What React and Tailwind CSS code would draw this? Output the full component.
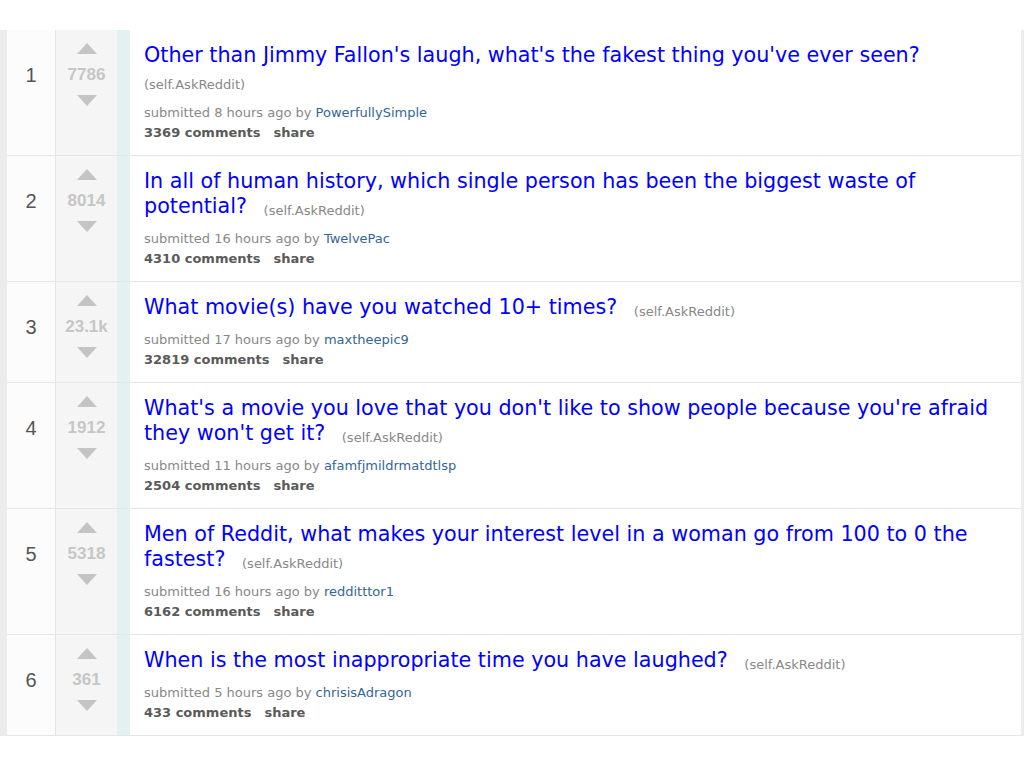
import React from "react";

const posts = [
  {
    rank: 1,
    score: "7786",
    title: "Other than Jimmy Fallon's laugh, what's the fakest thing you've ever seen?",
    time: "8 hours",
    author: "PowerfullySimple",
    comments: 3369,
  },
  {
    rank: 2,
    score: "8014",
    title: "In all of human history, which single person has been the biggest waste of potential?",
    time: "16 hours",
    author: "TwelvePac",
    comments: 4310,
  },
  {
    rank: 3,
    score: "23.1k",
    title: "What movie(s) have you watched 10+ times?",
    time: "17 hours",
    author: "maxtheepic9",
    comments: 32819,
  },
  {
    rank: 4,
    score: "1912",
    title: "What's a movie you love that you don't like to show people because you're afraid they won't get it?",
    time: "11 hours",
    author: "afamfjmildrmatdtlsp",
    comments: 2504,
  },
  {
    rank: 5,
    score: "5318",
    title: "Men of Reddit, what makes your interest level in a woman go from 100 to 0 the fastest?",
    time: "16 hours",
    author: "redditttor1",
    comments: 6162,
  },
  {
    rank: 6,
    score: "361",
    title: "When is the most inappropriate time you have laughed?",
    time: "5 hours",
    author: "chrisisAdragon",
    comments: 433,
  },
];

const Arrow = ({ down }) => (
  <svg width="20" height="11" viewBox="0 0 20 11" className="block">
    <polygon
      points={down ? "0,0 20,0 10,11" : "10,0 20,11 0,11"}
      fill="#c4c4c4"
    />
  </svg>
);

const Post = ({ post }) => (
  <div className="flex border-b border-[#e3e7ea]">
    <div className="w-[49px] shrink-0 bg-[#fcfcfc] border-r border-[#e3e6e8] flex justify-center pt-[33px] text-[20px] leading-[24px] text-[#555] font-['Liberation_Sans',Arial,sans-serif]">
      {post.rank}
    </div>
    <div className="w-[61px] shrink-0 bg-[#f5f5f5] flex flex-col items-center pt-[13px]">
      <Arrow />
      <div className="mt-[11px] mb-[10px] text-[17px] font-bold text-[#c6c6c6] leading-[20px] font-['Liberation_Sans',Arial,sans-serif]">
        {post.score}
      </div>
      <Arrow down />
    </div>
    <div className="w-[13px] shrink-0 bg-[#e4f1f1]" />
    <div className="flex-1 bg-white pl-[14px] pr-[20px] pt-[13px] pb-[12px] font-['DejaVu_Sans',Verdana,sans-serif]">
      <p className="text-[20.7px] leading-[25px] text-[#0000ff]">
        {post.title}
        <span className="inline-block w-[10px]" />{" "}
        <span className="text-[13px] leading-none align-[-2px] text-[#888]">(self.AskReddit)</span>
      </p>
      <p className="mt-[10px] text-[13px] leading-[20px] text-[#888]">
        submitted {post.time} ago by{" "}
        <span className="text-[#369]">{post.author}</span>
      </p>
      <p className="text-[13px] leading-[20px] font-bold text-[#5a5a5a]">
        {post.comments} comments<span className="ml-[13px]">share</span>
      </p>
    </div>
  </div>
);

export default function App() {
  return (
    <div className="w-[1024px] h-[768px] bg-white pt-[30px] overflow-hidden">
      <div className="flex bg-[#ececec] pl-[7px] pr-[3px]">
        <div className="flex-1">
          {posts.map((p) => (
            <Post key={p.rank} post={p} />
          ))}
        </div>
      </div>
    </div>
  );
}
